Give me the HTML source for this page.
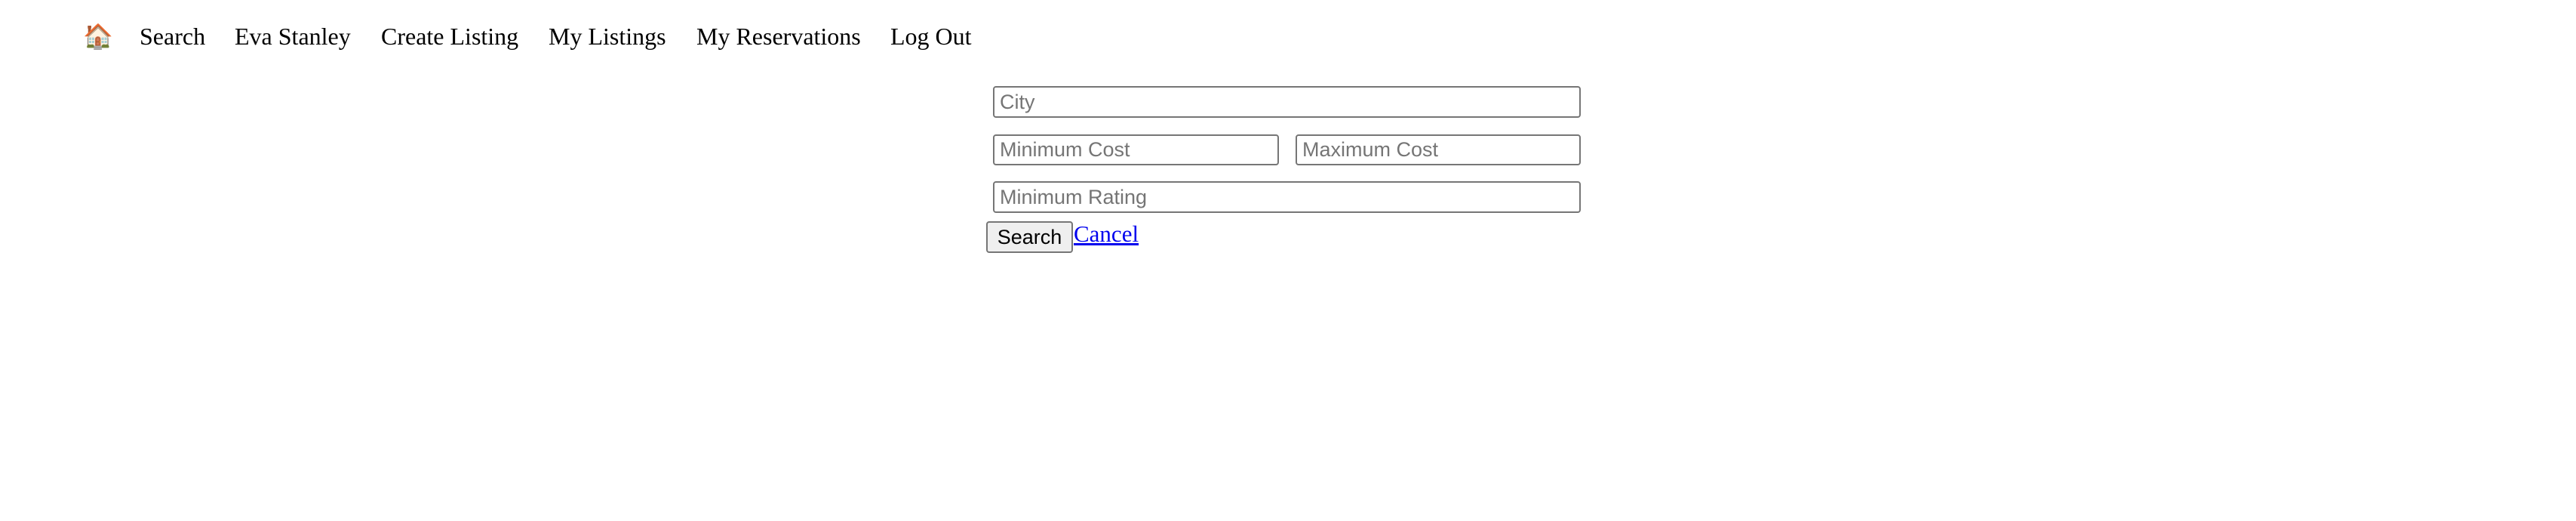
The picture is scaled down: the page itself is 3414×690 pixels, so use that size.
<!DOCTYPE html>
<html><head><meta charset="utf-8"><style>
html,body{margin:0;padding:0;width:3414px;height:690px;background:#fff;overflow:hidden}
.nav{position:absolute;top:28px;font-family:"Liberation Serif",serif;font-size:32px;color:#000;white-space:nowrap;line-height:40px}
.in{position:absolute;box-sizing:border-box;border:2px solid #767676;border-radius:4px;background:#fff;font-family:"Liberation Sans",sans-serif;font-size:27px;color:#757575;padding-left:7px;display:flex;align-items:center}
.btn{position:absolute;box-sizing:border-box;left:1307px;top:293px;width:115px;height:42px;border:2px solid #767676;border-radius:4px;background:#efefef;font-family:"Liberation Sans",sans-serif;font-size:27px;color:#000;display:flex;align-items:center;justify-content:center}
.cancel{position:absolute;left:1423px;top:292px;font-family:"Liberation Serif",serif;font-size:31px;color:#00e;text-decoration:underline;line-height:36px}
</style></head><body>
<div class="nav" style="left:110px">🏠</div>
<div class="nav" style="left:185px">Search</div>
<div class="nav" style="left:311px">Eva Stanley</div>
<div class="nav" style="left:505px">Create Listing</div>
<div class="nav" style="left:727px">My Listings</div>
<div class="nav" style="left:923px">My Reservations</div>
<div class="nav" style="left:1180px">Log Out</div>

<div class="in" style="left:1316px;top:114px;width:779px;height:42px">City</div>
<div class="in" style="left:1316px;top:178px;width:379px;height:41px">Minimum Cost</div>
<div class="in" style="left:1717px;top:178px;width:378px;height:41px">Maximum Cost</div>
<div class="in" style="left:1316px;top:240px;width:779px;height:42px">Minimum Rating</div>
<div class="btn">Search</div>
<div class="cancel">Cancel</div>
</body></html>
